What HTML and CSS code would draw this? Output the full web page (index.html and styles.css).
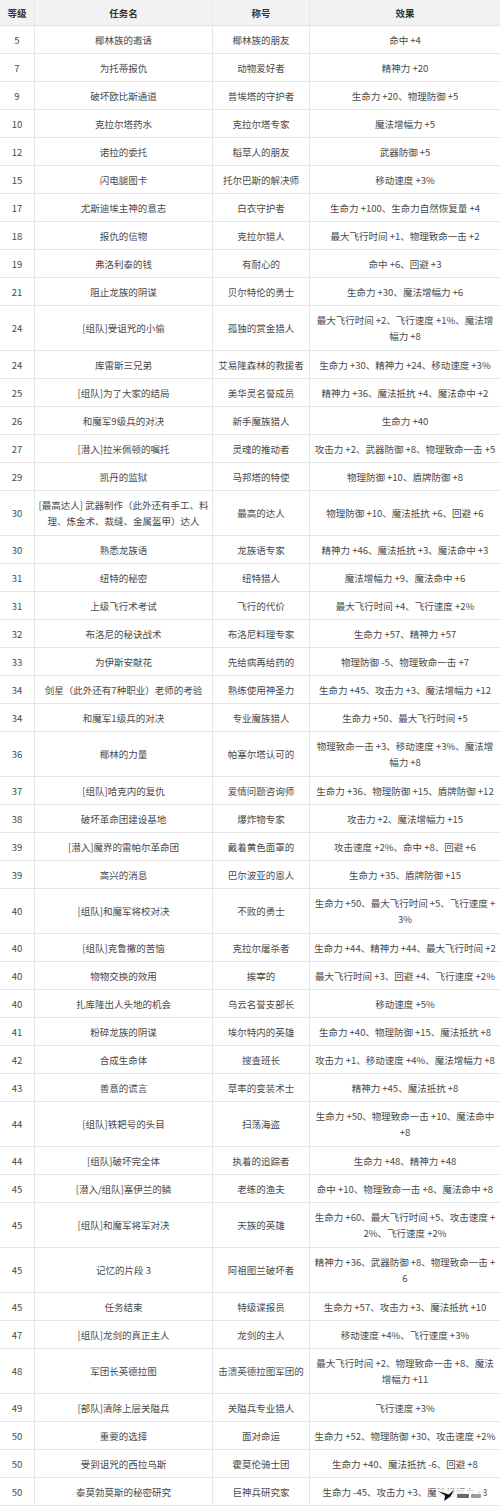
FILE: index.html
```html
<!DOCTYPE html>
<html lang="zh-CN">
<head>
<meta charset="utf-8">
<title>任务称号表</title>
<link rel="stylesheet" href="styles.css">
</head>
<body>
<div class="table">
  <div class="row head"><div class="c">等级</div><div class="c">任务名</div><div class="c">称号</div><div class="c">效果</div></div>
  <div class="row"><div class="c">5</div><div class="c">椰林族的邀请</div><div class="c">椰林族的朋友</div><div class="c">命中 +4</div></div>
  <div class="row"><div class="c">7</div><div class="c">为托蒂报仇</div><div class="c">动物爱好者</div><div class="c">精神力 +20</div></div>
  <div class="row"><div class="c">9</div><div class="c">破坏欧比斯通道</div><div class="c">普埃塔的守护者</div><div class="c">生命力 +20、物理防御 +5</div></div>
  <div class="row"><div class="c">10</div><div class="c">克拉尔塔药水</div><div class="c">克拉尔塔专家</div><div class="c">魔法增幅力 +5</div></div>
  <div class="row"><div class="c">12</div><div class="c">诺拉的委托</div><div class="c">稻草人的朋友</div><div class="c">武器防御 +5</div></div>
  <div class="row"><div class="c">15</div><div class="c">闪电腿图卡</div><div class="c">托尔巴斯的解决师</div><div class="c">移动速度 +3%</div></div>
  <div class="row"><div class="c">17</div><div class="c">尤斯迪埃主神的意志</div><div class="c">白衣守护者</div><div class="c">生命力 +100、生命力自然恢复量 +4</div></div>
  <div class="row"><div class="c">18</div><div class="c">报仇的信物</div><div class="c">克拉尔猎人</div><div class="c">最大飞行时间 +1、物理致命一击 +2</div></div>
  <div class="row"><div class="c">19</div><div class="c">弗洛利泰的钱</div><div class="c">有耐心的</div><div class="c">命中 +6、回避 +3</div></div>
  <div class="row"><div class="c">21</div><div class="c">阻止龙族的阴谋</div><div class="c">贝尔特伦的勇士</div><div class="c">生命力 +30、魔法增幅力 +6</div></div>
  <div class="row tall"><div class="c">24</div><div class="c">[组队]受诅咒的小偷</div><div class="c">孤独的赏金猎人</div><div class="c">最大飞行时间 +2、飞行速度 +1%、魔法增<br>幅力 +8</div></div>
  <div class="row"><div class="c">24</div><div class="c">库雷斯三兄弟</div><div class="c">艾易隆森林的救援者</div><div class="c">生命力 +30、精神力 +24、移动速度 +3%</div></div>
  <div class="row"><div class="c">25</div><div class="c">[组队]为了大家的结局</div><div class="c">美华灵名誉成员</div><div class="c">精神力 +36、魔法抵抗 +4、魔法命中 +2</div></div>
  <div class="row"><div class="c">26</div><div class="c">和魔军9级兵的对决</div><div class="c">新手魔族猎人</div><div class="c">生命力 +40</div></div>
  <div class="row"><div class="c">27</div><div class="c">[潜入]拉米佩顿的嘱托</div><div class="c">灵魂的推动者</div><div class="c">攻击力 +2、武器防御 +8、物理致命一击 +5</div></div>
  <div class="row"><div class="c">29</div><div class="c">凯丹的监狱</div><div class="c">马邦塔的特使</div><div class="c">物理防御 +10、盾牌防御 +8</div></div>
  <div class="row tall"><div class="c">30</div><div class="c">[最高达人] 武器制作（此外还有手工、料<br>理、炼金术、裁缝、金属盔甲）达人</div><div class="c">最高的达人</div><div class="c">物理防御 +10、魔法抵抗 +6、回避 +6</div></div>
  <div class="row"><div class="c">30</div><div class="c">熟悉龙族语</div><div class="c">龙族语专家</div><div class="c">精神力 +46、魔法抵抗 +3、魔法命中 +3</div></div>
  <div class="row"><div class="c">31</div><div class="c">纽特的秘密</div><div class="c">纽特猎人</div><div class="c">魔法增幅力 +9、魔法命中 +6</div></div>
  <div class="row"><div class="c">31</div><div class="c">上级飞行术考试</div><div class="c">飞行的代价</div><div class="c">最大飞行时间 +4、飞行速度 +2%</div></div>
  <div class="row"><div class="c">32</div><div class="c">布洛尼的秘诀战术</div><div class="c">布洛尼料理专家</div><div class="c">生命力 +57、精神力 +57</div></div>
  <div class="row"><div class="c">33</div><div class="c">为伊斯安献花</div><div class="c">先给病再给药的</div><div class="c">物理防御 -5、物理致命一击 +7</div></div>
  <div class="row"><div class="c">34</div><div class="c">剑星（此外还有7种职业）老师的考验</div><div class="c">熟练使用神圣力</div><div class="c">生命力 +45、攻击力 +3、魔法增幅力 +12</div></div>
  <div class="row"><div class="c">34</div><div class="c">和魔军1级兵的对决</div><div class="c">专业魔族猎人</div><div class="c">生命力 +50、最大飞行时间 +5</div></div>
  <div class="row tall"><div class="c">36</div><div class="c">椰林的力量</div><div class="c">帕塞尔塔认可的</div><div class="c">物理致命一击 +3、移动速度 +3%、魔法增<br>幅力 +8</div></div>
  <div class="row"><div class="c">37</div><div class="c">[组队]哈克内的复仇</div><div class="c">爱情问题咨询师</div><div class="c">生命力 +36、物理防御 +15、盾牌防御 +12</div></div>
  <div class="row"><div class="c">38</div><div class="c">破坏革命团建设基地</div><div class="c">爆炸物专家</div><div class="c">攻击力 +2、魔法增幅力 +15</div></div>
  <div class="row"><div class="c">39</div><div class="c">[潜入]魔界的雷帕尔革命团</div><div class="c">戴着黄色面罩的</div><div class="c">攻击速度 +2%、命中 +8、回避 +6</div></div>
  <div class="row"><div class="c">39</div><div class="c">高兴的消息</div><div class="c">巴尔波亚的恩人</div><div class="c">生命力 +35、盾牌防御 +15</div></div>
  <div class="row tall"><div class="c">40</div><div class="c">[组队]和魔军将校对决</div><div class="c">不败的勇士</div><div class="c">生命力 +50、最大飞行时间 +5、飞行速度 +<br>3%</div></div>
  <div class="row"><div class="c">40</div><div class="c">[组队]克鲁撒的苦恼</div><div class="c">克拉尔屠杀者</div><div class="c">生命力 +44、精神力 +44、最大飞行时间 +2</div></div>
  <div class="row"><div class="c">40</div><div class="c">物物交换的效用</div><div class="c">挨宰的</div><div class="c">最大飞行时间 +3、回避 +4、飞行速度 +2%</div></div>
  <div class="row"><div class="c">40</div><div class="c">扎库隆出人头地的机会</div><div class="c">乌云名誉支部长</div><div class="c">移动速度 +5%</div></div>
  <div class="row"><div class="c">41</div><div class="c">粉碎龙族的阴谋</div><div class="c">埃尔特内的英雄</div><div class="c">生命力 +40、物理防御 +15、魔法抵抗 +8</div></div>
  <div class="row"><div class="c">42</div><div class="c">合成生命体</div><div class="c">搜查班长</div><div class="c">攻击力 +1、移动速度 +4%、魔法增幅力 +8</div></div>
  <div class="row"><div class="c">43</div><div class="c">善意的谎言</div><div class="c">草率的变装术士</div><div class="c">精神力 +45、魔法抵抗 +8</div></div>
  <div class="row tall"><div class="c">44</div><div class="c">[组队]铁耙号的头目</div><div class="c">扫荡海盗</div><div class="c">生命力 +50、物理致命一击 +10、魔法命中<br>+8</div></div>
  <div class="row"><div class="c">44</div><div class="c">[组队]破坏完全体</div><div class="c">执着的追踪者</div><div class="c">生命力 +48、精神力 +48</div></div>
  <div class="row"><div class="c">45</div><div class="c">[潜入/组队]塞伊兰的鳞</div><div class="c">老练的渔夫</div><div class="c">命中 +10、物理致命一击 +8、魔法命中 +8</div></div>
  <div class="row tall"><div class="c">45</div><div class="c">[组队]和魔军将军对决</div><div class="c">天族的英雄</div><div class="c">生命力 +60、最大飞行时间 +5、攻击速度 +<br>2%、飞行速度 +2%</div></div>
  <div class="row tall"><div class="c">45</div><div class="c">记忆的片段 3</div><div class="c">阿祖图兰破坏者</div><div class="c">精神力 +36、武器防御 +8、物理致命一击 +<br>6</div></div>
  <div class="row"><div class="c">45</div><div class="c">任务结束</div><div class="c">特级谍报员</div><div class="c">生命力 +57、攻击力 +3、魔法抵抗 +10</div></div>
  <div class="row"><div class="c">47</div><div class="c">[组队]龙剑的真正主人</div><div class="c">龙剑的主人</div><div class="c">移动速度 +4%、飞行速度 +3%</div></div>
  <div class="row tall"><div class="c">48</div><div class="c">军团长英德拉图</div><div class="c">击溃英德拉图军团的</div><div class="c">最大飞行时间 +2、物理致命一击 +8、魔法<br>增幅力 +11</div></div>
  <div class="row"><div class="c">49</div><div class="c">[部队]清除上层关隘兵</div><div class="c">关隘兵专业猎人</div><div class="c">飞行速度 +3%</div></div>
  <div class="row"><div class="c">50</div><div class="c">重要的选择</div><div class="c">面对命运</div><div class="c">生命力 +52、物理防御 +30、攻击速度 +2%</div></div>
  <div class="row"><div class="c">50</div><div class="c">受到诅咒的西拉乌斯</div><div class="c">霍莫伦骑士团</div><div class="c">生命力 +40、魔法抵抗 -6、回避 +8</div></div>
  <div class="row last"><div class="c">50</div><div class="c">泰莫勃莫斯的秘密研究</div><div class="c">巨神兵研究家</div><div class="c">生命力 -45、攻击力 +3、魔法增幅力 +8</div>
    <div class="mark" aria-hidden="true">
      <svg class="mark-logo" viewBox="0 0 20 14" width="18" height="13"><path d="M1 2 L13 6 L19 1 L15 8 L8 13 L9 7 Z" fill="#111"/></svg>
      <span class="mark-bar"></span>
      <span class="mark-bar short"></span>
    </div>
  </div>
</div>
</body>
</html>
```

FILE: styles.css
```css
html, body {
  margin: 0;
  padding: 0;
  background: #ffffff;
}

body {
  width: 500px;
  font-family: "Noto Sans CJK SC", "Noto Sans", sans-serif;
  font-size: 9.5px;
  color: #4a4a4a;
}

.table {
  width: 500px;
}

.row {
  display: grid;
  grid-template-columns: 35px 178px 97px 1fr;
  height: 28px;
  box-sizing: border-box;
  border-bottom: 1px solid #e6e6e6;
}

.row.tall {
  height: 45px;
}

.row.last {
  position: relative;
}

.c {
  display: flex;
  align-items: center;
  justify-content: center;
  text-align: center;
  white-space: nowrap;
  line-height: 16px;
  border-right: 1px solid #e6e6e6;
  overflow: hidden;
}

.row .c:nth-child(4) {
  border-right: none;
}

.head {
  height: 26px;
  background: #f2f2f2;
  border-bottom: 1px solid #e3e3e3;
}

.head .c {
  color: #333333;
  font-weight: 700;
  border-right-color: #e9e9e9;
}

.mark {
  position: absolute;
  right: 16px;
  bottom: 3px;
  display: flex;
  align-items: center;
  gap: 2px;
  background: rgba(255, 255, 255, 0.8);
  padding: 0 3px 0 1px;
  height: 13px;
}

.mark-logo {
  display: block;
}

.mark-bar {
  display: block;
  width: 12px;
  height: 4px;
  background: #6a6a6a;
  border-radius: 1px;
}

.mark-bar.short {
  width: 10px;
  background: #9a9a9a;
}
```
